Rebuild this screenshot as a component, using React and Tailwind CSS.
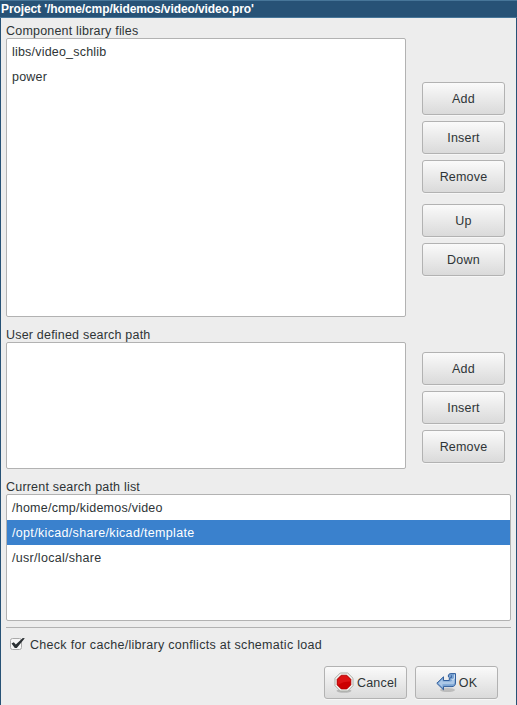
import React from "react";

function Button({ children, className = "" }) {
  return (
    <button className={`flex h-[33px] w-[83px] shrink-0 items-center justify-center rounded-[3px] border border-[#b2b2b2] bg-linear-to-b from-[#fafafa] to-[#dadada] text-[12.5px] leading-4 tracking-[0.2px] whitespace-nowrap shadow-[0_1px_0_#f6f6f6] ${className}`}>
      {children}
    </button>
  );
}

function Label({ children, className = "" }) {
  return <div className={`h-4 shrink-0 leading-[18px] whitespace-nowrap ${className}`}>{children}</div>;
}

function Row({ children, selected, className = "" }) {
  return (
    <div className={`h-[25px] pl-[5px] leading-[27px] whitespace-nowrap ${selected ? "bg-[#3a81cd] text-white" : ""} ${className}`}>
      {children}
    </div>
  );
}

function StopIcon() {
  return (
    <svg width="20" height="21" viewBox="0 0 20 21" className="shrink-0">
      <ellipse cx="10" cy="18.8" rx="7.5" ry="2" fill="#777" opacity="0.4" />
      <path d="M6.3 1h7.4l5.3 5.3v7.4L13.7 19H6.3L1 13.7V6.3z" fill="#f4f4f2" stroke="#a9ada6" />
      <path d="M7.2 3.2h5.6l4.1 4.1v5.6L12.8 17H7.2l-4.1-4.1V7.3z" fill="#cc0000" stroke="#a80000" strokeWidth="0.7" />
      <path d="M7.4 4h5.2l3.5 3.5v2C12 9.5 7 10.5 3.9 13V7.5z" fill="#e82020" opacity="0.6" />
    </svg>
  );
}

function ReturnIcon() {
  return (
    <svg width="21" height="20" viewBox="0 0 21 20" className="shrink-0">
      <ellipse cx="11.5" cy="17" rx="7.5" ry="2" fill="#777" opacity="0.35" />
      <path d="M7.5 3.8v3.7h5.8V4.8c-.7-.4-1-1-1-1.8 0-1.5 1-2.4 2.6-2.4h4.6v9.5c0 2.1-1.4 3.5-3.5 3.5H7.5v3.2L.8 10.3z" fill="#7ba4d3" stroke="#315e9c" strokeLinejoin="round" />
      <path d="M6.5 6.2v2.3h8.1c1 0 1.5-.8 1.5-2l2.4-2V9c0 1.4-.8 2.3-2.3 2.3H6.5v2.9l-4.2-3.9z" fill="#bcd4ee" opacity="0.75" />
      <path d="M13.8 4.8h1.6V2.3" fill="none" stroke="#315e9c" strokeWidth="0.9" />
      <path d="M18.5 1.5v4.2c-1 .8-2 .9-3.2.5" fill="none" stroke="#d2e2f3" strokeWidth="0.9" />
    </svg>
  );
}

export default function App() {
  return (
    <div className="flex h-[705px] w-[517px] flex-col overflow-hidden bg-[#ededed] font-['Liberation_Sans',Arial,sans-serif] text-[12.5px] tracking-[0.2px] text-[#2e3436]">
      <header className="h-[18px] shrink-0 border-y border-[#477699] bg-[#275276] pl-px text-[12px] leading-4 font-bold whitespace-nowrap text-white">
        <span className="tracking-[-0.1px]">Project '/home/cmp/kidemos/video/video.pro'</span>
      </header>
      <main className="flex min-h-0 flex-1 flex-col border-x border-[#275276] pr-[5px] pl-[5px]">
        <section className="flex h-[299px] shrink-0">
          <div className="w-[400px] pt-[4px]">
            <Label>Component library files</Label>
            <div className="h-[279px] rounded-[2px] border border-[#b2b2b2] bg-white">
              <Row>libs/video_schlib</Row>
              <Row>power</Row>
            </div>
          </div>
          <div className="ml-4 flex flex-col gap-[6px] pt-[64px]">
            <Button>Add</Button>
            <Button>Insert</Button>
            <Button>Remove</Button>
            <Button className="mt-[5px]">Up</Button>
            <Button>Down</Button>
          </div>
        </section>
        <section className="flex h-[152px] shrink-0">
          <div className="w-[400px] pt-[9px]">
            <Label>User defined search path</Label>
            <div className="h-[127px] rounded-[2px] border border-[#b2b2b2] bg-white" />
          </div>
          <div className="ml-4 flex flex-col gap-[6px] pt-[35px]">
            <Button>Add</Button>
            <Button>Insert</Button>
            <Button>Remove</Button>
          </div>
        </section>
        <section className="shrink-0 pt-[9px]">
          <Label>Current search path list</Label>
          <div className="h-[127px] rounded-[2px] border border-[#b2b2b2] bg-white">
            <Row className="tracking-[0.24px]">/home/cmp/kidemos/video</Row>
            <Row selected className="tracking-[0.33px]">/opt/kicad/share/kicad/template</Row>
            <Row className="tracking-[0.3px]">/usr/local/share</Row>
          </div>
        </section>
        <div className="mt-[6px] h-px shrink-0 bg-[#b2b2b2]" />
        <label className="mt-[9px] flex h-4 shrink-0 items-center pl-1">
          <svg width="16" height="16" viewBox="0 0 16 16" className="mr-1 shrink-0">
            <rect x="0.5" y="1.5" width="11" height="11" rx="2" fill="#f6f6f6" stroke="#aaa" />
            <path d="M1.5 6.5l2.3-1.2 2 2.2L12.8 1l2 .2L6.8 11H4.8z" fill="#2b3033" />
          </svg>
          <div className="leading-4 tracking-[0.29px] whitespace-nowrap">Check for cache/library conflicts at schematic load</div>
        </label>
        <footer className="mt-[13px] flex shrink-0 justify-end gap-2 pr-[13px]">
          <Button><StopIcon /><span className="ml-[3px]">Cancel</span></Button>
          <Button><ReturnIcon /><span className="ml-[2px]">OK</span></Button>
        </footer>
      </main>
    </div>
  );
}
